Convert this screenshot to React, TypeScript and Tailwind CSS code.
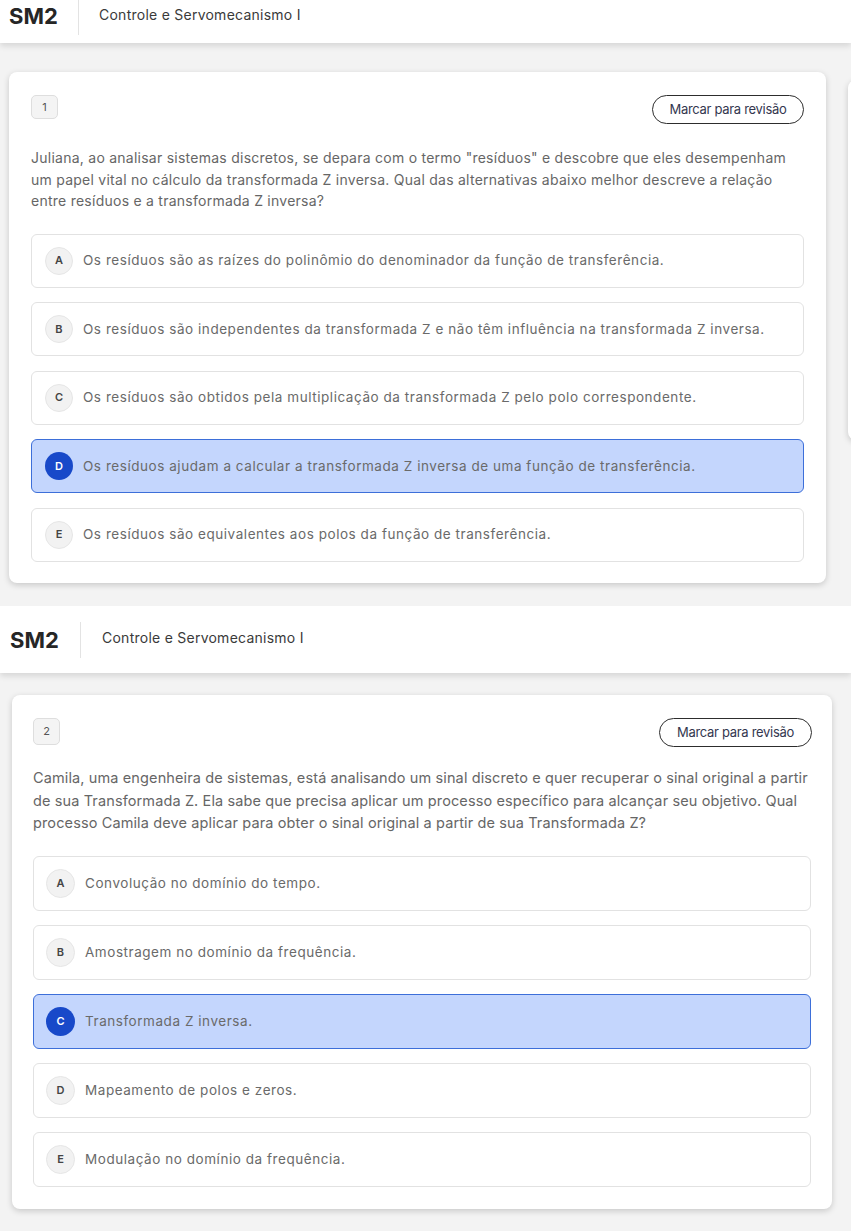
import React from "react";

type Opt = { letter: string; text: string; selected?: boolean };

const q1: Opt[] = [
  { letter: "A", text: "Os resíduos são as raízes do polinômio do denominador da função de transferência." },
  { letter: "B", text: "Os resíduos são independentes da transformada Z e não têm influência na transformada Z inversa." },
  { letter: "C", text: "Os resíduos são obtidos pela multiplicação da transformada Z pelo polo correspondente." },
  { letter: "D", text: "Os resíduos ajudam a calcular a transformada Z inversa de uma função de transferência.", selected: true },
  { letter: "E", text: "Os resíduos são equivalentes aos polos da função de transferência." },
];

const q2: Opt[] = [
  { letter: "A", text: "Convolução no domínio do tempo." },
  { letter: "B", text: "Amostragem no domínio da frequência." },
  { letter: "C", text: "Transformada Z inversa.", selected: true },
  { letter: "D", text: "Mapeamento de polos e zeros." },
  { letter: "E", text: "Modulação no domínio da frequência." },
];

function Header({ tall }: { tall?: boolean }) {
  return (
    <div
      className={
        "relative z-10 flex bg-white shadow-[0_3px_6px_rgba(0,0,0,0.12)] " +
        (tall ? "h-[67px] items-center pl-[10px]" : "h-[43px] items-start pl-[9px]")
      }
    >
      <span
        className={
          "w-[50px] text-[22px] font-bold leading-none text-[#262626] [font-family:Inter,sans-serif] " +
          (tall ? "" : "mt-[5px]")
        }
      >
        SM2
      </span>
      <div className={tall ? "ml-[20px] h-[36px] w-px bg-[#e3e3e3]" : "ml-[19px] h-[35px] w-px bg-[#e3e3e3]"} />
      <span
        className={
          "text-[14px] tracking-[0.25px] text-[#3a3a3a] [font-family:Inter,sans-serif] " +
          (tall ? "ml-[21px] -mt-[4px]" : "ml-[20px] mt-[4px]")
        }
      >
        Controle e Servomecanismo I
      </span>
    </div>
  );
}

function Option({ o, big }: { o: Opt; big?: boolean }) {
  return (
    <div
      className={
        "flex items-center rounded-[6px] border " +
        (big ? "h-[55px] pl-[12px] " : "h-[54px] pl-[13px] ") +
        (o.selected ? "border-[#3d6fd9] bg-[#c4d6fd]" : "border-[#e2e2e2] bg-white")
      }
    >
      <span
        className={
          "flex shrink-0 items-center justify-center rounded-full text-[11px] font-semibold " +
          (big ? "h-[29px] w-[29px] " : "h-[28px] w-[28px] ") +
          (o.selected ? "bg-[#1849c9] text-white" : "border border-[#e6e6e6] bg-[#f2f2f2] text-[#444]")
        }
      >
        {o.letter}
      </span>
      <span className="ml-[10px] text-[13.5px] tracking-[0.55px] text-[#6a6a6a]">{o.text}</span>
    </div>
  );
}

function Card({
  n,
  text,
  opts,
  big,
}: {
  n: string;
  text: React.ReactNode;
  opts: Opt[];
  big?: boolean;
}) {
  return (
    <div
      className={
        "shrink-0 rounded-[8px] bg-white shadow-[0_2px_6px_rgba(0,0,0,0.18)] [font-family:Inter,sans-serif] " +
        (big ? "w-[820px] px-[21px] pt-[23px] pb-[22px]" : "w-[817px] px-[22px] pt-[23px] pb-[21px]")
      }
    >
      <div className="flex items-start justify-between">
        <span
          className={
            "flex items-center justify-center rounded-[5px] border border-[#dedede] bg-[#f4f4f4] text-[11px] text-[#555] " +
            (big ? "h-[27px] w-[27px]" : "h-[24px] w-[27px]")
          }
        >
          {n}
        </span>
        <button
          className={
            "rounded-full border-[1.5px] border-[#2d2d2d] text-[13px] tracking-[-0.3px] text-[#34374f] " +
            (big ? "h-[29px] w-[153px] -mr-[1px]" : "h-[29px] w-[152px]")
          }
        >
          Marcar para revisão
        </button>
      </div>
      <p
        className={
          "text-[#666] " +
          (big
            ? "mt-[20px] text-[14.5px] leading-[22.5px] tracking-[0.12px]"
            : "mt-[23px] text-[14px] leading-[21.5px] tracking-[0.25px]")
        }
      >
        {text}
      </p>
      <div className={"flex flex-col " + (big ? "mt-[21px] gap-[14px]" : "mt-[22px] gap-[14.5px]")}>
        {opts.map((o) => (
          <Option key={o.letter} o={o} big={big} />
        ))}
      </div>
    </div>
  );
}

export default function App() {
  return (
    <div className="w-[851px] overflow-hidden bg-white [font-family:Inter,sans-serif]">
      <section className="h-[606px] overflow-hidden bg-[#f3f3f3]">
        <Header />
        <div className="flex items-start gap-[22px] pl-[9px] pt-[29px]">
          <Card
            n="1"
            opts={q1}
            text={
              <>
                Juliana, ao analisar sistemas discretos, se depara com o termo "resíduos" e descobre que eles desempenham
                <br />
                um papel vital no cálculo da transformada Z inversa. Qual das alternativas abaixo melhor descreve a relação
                <br />
                entre resíduos e a transformada Z inversa?
              </>
            }
          />
          <div className="mt-[8px] h-[360px] w-[200px] shrink-0 rounded-[8px] bg-white shadow-[0_2px_6px_rgba(0,0,0,0.18)]" />
        </div>
      </section>
      <section className="h-[625px] overflow-hidden bg-[#f3f3f3]">
        <Header tall />
        <div className="pl-[12px] pt-[22px]">
          <Card
            n="2"
            big
            opts={q2}
            text={
              <>
                Camila, uma engenheira de sistemas, está analisando um sinal discreto e quer recuperar o sinal original a partir
                <br />
                de sua Transformada Z. Ela sabe que precisa aplicar um processo específico para alcançar seu objetivo. Qual
                <br />
                processo Camila deve aplicar para obter o sinal original a partir de sua Transformada Z?
              </>
            }
          />
        </div>
      </section>
    </div>
  );
}
